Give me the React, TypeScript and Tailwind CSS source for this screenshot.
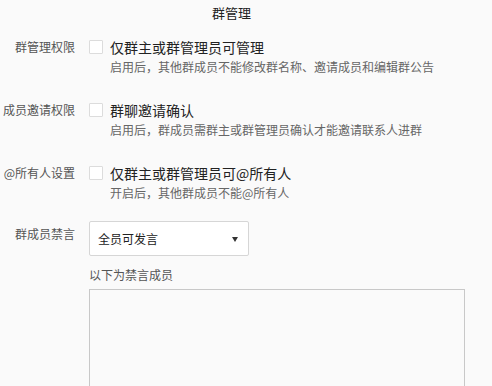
const font = { fontFamily: '"Noto Sans CJK SC", "Noto Sans", sans-serif' };

type Row = { label: string; title: string; desc: string };

const rows: Row[] = [
  {
    label: '群管理权限',
    title: '仅群主或群管理员可管理',
    desc: '启用后，其他群成员不能修改群名称、邀请成员和编辑群公告',
  },
  {
    label: '成员邀请权限',
    title: '群聊邀请确认',
    desc: '启用后，群成员需群主或群管理员确认才能邀请联系人进群',
  },
  {
    label: '@所有人设置',
    title: '仅群主或群管理员可@所有人',
    desc: '开启后，其他群成员不能@所有人',
  },
];

const App = () => {
  return (
    <div className="w-[492px] h-[386px] overflow-hidden bg-[#fafafa]" style={font}>
      <div className="w-[463px] h-[25px] text-center text-[13px] leading-[25px] text-[#222]">群管理</div>

      <div className="mt-[12px] flex flex-col gap-[23px]">
        {rows.map((r) => (
          <div key={r.label} className="flex">
            <div className="w-[75px] shrink-0 text-right text-[12px] leading-[20px] text-[#555]">{r.label}</div>
            <div className="ml-[14px] mt-[3px] w-[14px] h-[14px] shrink-0 border border-[#dcdcdc] bg-white rounded-[1px]" />
            <div className="ml-[7px] flex flex-col">
              <div className="text-[14px] leading-[20px] text-[#222]">{r.title}</div>
              <div className="text-[12px] leading-[20px] text-[#666]">{r.desc}</div>
            </div>
          </div>
        ))}
      </div>

      <div className="mt-[18px] flex">
        <div className="w-[75px] shrink-0 mt-[3px] text-right text-[12px] leading-[20px] text-[#555]">群成员禁言</div>
        <div className="ml-[14px] flex flex-col">
          <div className="w-[160px] h-[35px] flex items-center justify-between pl-[8px] pr-[10px] bg-white border border-[#d6d6d6] rounded-[2px]">
            <span className="text-[12px] text-[#222]">全员可发言</span>
            <svg width="6" height="5" viewBox="0 0 6 5" className="mt-[2px]">
              <path d="M0 0 H6 L3 5 Z" fill="#333" />
            </svg>
          </div>
          <div className="mt-[9px] text-[12px] leading-[20px] text-[#555]">以下为禁言成员</div>
          <div className="mt-[4px] w-[376px] h-[130px] border border-[#c8c8c8] bg-[#fafafa]" />
        </div>
      </div>
    </div>
  );
};

export default App;
